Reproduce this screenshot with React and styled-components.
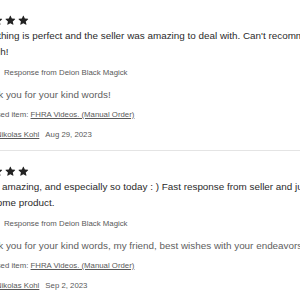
import React from 'react'
import styled, { createGlobalStyle } from 'styled-components'

const GlobalStyle = createGlobalStyle`
    html, body {
        margin: 0;
        padding: 0;
        background: #fff;
        overflow: hidden;
    }
    body {
        font-family: "Liberation Sans", Arial, sans-serif;
        color: #222;
    }
`;

const Viewport = styled.div`
    width: 300px;
    height: 300px;
    overflow: hidden;
`;
const ReviewList = styled.div`
    margin-left: -28px;
    width: 520px;
`;
const ReviewItem = styled.div`
    padding: 14px 0 7px;
    border-bottom: 1px solid #e4e4e4;
`;
const StarRow = styled.div`
    display: flex;
    margin-left: -6px;
    height: 12.7px;
`;
const Star = styled.svg`
    width: 12.7px;
    height: 12.7px;
    fill: #222;
    flex: none;
`;
const ReviewText = styled.p`
    margin: 1.3px 0 0;
    padding-left: 0.9px;
    font-size: 9.9px;
    line-height: 16px;
    color: #2a2a2a;
    white-space: pre;
`;
const Response = styled.div`
    padding-left: 3.7px;
`;
const ResponseHeader = styled.div`
    display: flex;
    align-items: center;
    gap: 12.3px;
    margin-top: 5px;
    height: 16px;
    font-size: 7.8px;
    color: #595959;
`;
const ShopIcon = styled.span`
    width: 16px;
    height: 16px;
    border-radius: 3px;
    background: #3a3a3a;
    flex: none;
`;
const ResponseText = styled.p`
    margin: 6.5px 0 0;
    font-size: 9.9px;
    line-height: 16px;
    color: #5e5e5e;
    white-space: nowrap;
`;
const PurchasedItem = styled.div`
    margin-top: 5.5px;
    font-size: 7.8px;
    line-height: 12px;
    color: #595959;
    white-space: nowrap;
`;
const ItemLink = styled.a`
    color: #595959;
    text-decoration: underline;
    text-underline-offset: 1px;
`;
const Reviewer = styled.div`
    display: flex;
    align-items: center;
    gap: 8px;
    margin-top: 6px;
    height: 16px;
    font-size: 7.8px;
    color: #595959;
    white-space: nowrap;
`;
const Avatar = styled.span`
    width: 16px;
    height: 16px;
    border-radius: 50%;
    background: #cfcfcf;
    flex: none;
`;
const ReviewerName = styled.a`
    color: #595959;
    text-decoration: underline;
    text-underline-offset: 1px;
`;
const ReviewDate = styled.span`
    margin-left: -2px;
`;

const reviews = [
    {
        text: "Everything is perfect and the seller was amazing to deal with. Can't recommend them\nenough!",
        shop: 'Deion Black Magick',
        reply: 'Thank you for your kind words!',
        item: 'FHRA Videos. (Manual Order)',
        reviewer: 'Nikolas Kohl',
        date: 'Aug 29, 2023'
    },
    {
        text: 'Super amazing, and especially so today : ) Fast response from seller and just the\nAwesome product.',
        shop: 'Deion Black Magick',
        reply: 'Thank you for your kind words, my friend, best wishes with your endeavors!',
        item: 'FHRA Videos. (Manual Order)',
        reviewer: 'Nikolas Kohl',
        date: 'Sep 2, 2023'
    }
]

const StarIcon = () => (
    <Star viewBox="0 0 24 24">
        <path d="M20.83 9.15l-6-.52-2.37-5.55h-.92L9.18 8.63l-6 .52-.29.85 4.55 4-1.36 5.85.75.55L12 17.3l5.17 3.1.75-.55L16.56 14l4.55-4z" />
    </Star>
)

const App = () => {
    return (
        <Viewport>
            <GlobalStyle />
            <ReviewList>
                {reviews.map((review, i) => (
                    <ReviewItem key={i}>
                        <StarRow>
                            {[0, 1, 2, 3, 4].map(n => <StarIcon key={n} />)}
                        </StarRow>
                        <ReviewText>{review.text}</ReviewText>
                        <Response>
                            <ResponseHeader>
                                <ShopIcon />
                                <span>Response from {review.shop}</span>
                            </ResponseHeader>
                            <ResponseText>{review.reply}</ResponseText>
                        </Response>
                        <PurchasedItem>
                            Purchased item: <ItemLink href="#">{review.item}</ItemLink>
                        </PurchasedItem>
                        <Reviewer>
                            <Avatar />
                            <ReviewerName href="#">{review.reviewer}</ReviewerName>
                            <ReviewDate>{review.date}</ReviewDate>
                        </Reviewer>
                    </ReviewItem>
                ))}
            </ReviewList>
        </Viewport>
    )
}

export default App
